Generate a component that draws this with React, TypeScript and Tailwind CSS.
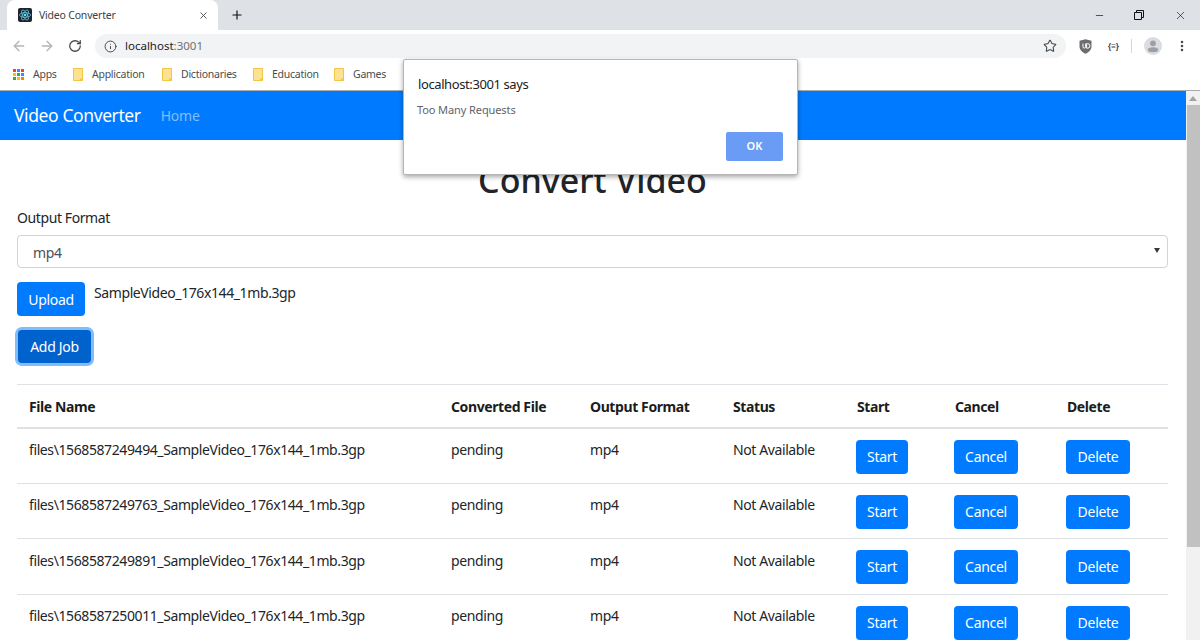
import React from "react";
import { ArrowLeft, ArrowRight, RotateCw, Info, Star, X, Plus, Minus, MoreVertical } from "lucide-react";

const FONT = "font-['Noto_Sans','Open_Sans',sans-serif]";

function Folder() {
  return (
    <svg width="10" height="13" viewBox="0 0 10 13" className="shrink-0">
      <path d="M.5.5h9v12h-9z" fill="#fde293" stroke="#f1c644" />
      <path d="M7 10.5h3v2H7z" fill="#f1c644" />
    </svg>
  );
}

function Bookmark({ label, w }: { label: string; w: string }) {
  return (
    <div className={`flex items-center gap-[9px] ${w}`}>
      <Folder />
      <span className="text-[10.5px] tracking-[-0.25px] text-[#4a4d51] whitespace-nowrap">{label}</span>
    </div>
  );
}

function AppsIcon() {
  const c = ["#ea4335", "#4285f4", "#ea4335", "#fbbc05", "#34a853", "#4285f4", "#34a853", "#fbbc05", "#ea8600"];
  return (
    <div className="grid grid-cols-3 gap-[1px] w-[11px] h-[11px] shrink-0">
      {c.map((x, i) => (
        <svg key={i} width="3" height="3" viewBox="0 0 3 3">
          <rect width="3" height="3" fill={x} />
        </svg>
      ))}
    </div>
  );
}

function ReactFavicon() {
  return (
    <svg width="14" height="14" viewBox="0 0 14 14" className="shrink-0">
      <rect width="14" height="14" rx="2" fill="#20232a" />
      <circle cx="7" cy="7" r="1.3" fill="#61dafb" />
      <g fill="none" stroke="#61dafb" strokeWidth=".7">
        <ellipse cx="7" cy="7" rx="5.6" ry="2.3" />
        <ellipse cx="7" cy="7" rx="5.6" ry="2.3" transform="rotate(60 7 7)" />
        <ellipse cx="7" cy="7" rx="5.6" ry="2.3" transform="rotate(120 7 7)" />
      </g>
    </svg>
  );
}

function Shield() {
  return (
    <svg width="13" height="15" viewBox="0 0 13 15">
      <path d="M.5 1.8 6.5.2l6 1.6v5.6c0 3.4-2.8 5.8-6 7.4-3.2-1.6-6-4-6-7.4z" fill="#6a6e73" />
      <path d="M4 4.6v3.2a1.3 1.3 0 0 0 2.6 0V4.6M7.6 4.6v4.6h1a2.3 2.3 0 0 0 0-4.6z" fill="none" stroke="#fff" strokeWidth="1" />
    </svg>
  );
}

function Avatar() {
  return (
    <svg width="18" height="18" viewBox="0 0 18 18">
      <circle cx="9" cy="9" r="9" fill="#dadce0" />
      <circle cx="9" cy="6.3" r="2.9" fill="#9aa0a6" />
      <ellipse cx="9" cy="12.8" rx="5.2" ry="2.5" fill="#9aa0a6" />
    </svg>
  );
}

function RestoreIcon() {
  return (
    <svg width="10" height="10" viewBox="0 0 10 10" fill="none" stroke="#111" strokeWidth="1">
      <path d="M.5 2.5h7v7h-7z" />
      <path d="M2.5 2.5v-2h7v7h-2" />
    </svg>
  );
}

function Btn({ label, w }: { label: string; w: string }) {
  return (
    <button className={`${w} h-[34px] rounded-[4px] bg-[#007bff] text-white text-[14px] tracking-[-0.3px] flex items-center justify-center`}>
      {label}
    </button>
  );
}

const rows = ["1568587249494", "1568587249763", "1568587249891", "1568587250011"];
const td = "px-3 pt-[10.5px] align-top h-[55.5px] border-b border-[#dee2e6]";
const tdb = "px-3 pt-[10.5px] align-top border-b border-[#dee2e6]";
const tdBtn = "pl-[11px] pr-3 pt-[11px] align-top border-b border-[#dee2e6]";

export default function App() {
  return (
    <div className={`relative w-[1200px] h-[640px] overflow-hidden bg-white text-[#212529] ${FONT}`}>
      {/* Tab strip */}
      <div className="h-[30px] bg-[#dee1e6] flex items-end pl-[7px]">
        <div className="w-[211px] h-[30px] bg-white rounded-t-[8px] flex items-center pl-[11px] pr-[9px]">
          <ReactFavicon />
          <span className="ml-[7px] mt-[1px] text-[10.5px] tracking-[-0.2px] text-[#3c4043] whitespace-nowrap">Video Converter</span>
          <X size={11} strokeWidth={2} className="ml-auto text-[#45484c]" />
        </div>
        <Plus size={14} strokeWidth={2} className="ml-[12px] mb-[8px] text-[#111]" />
        <div className="ml-auto h-[30px] flex items-center pr-[13px]">
          <Minus size={11} strokeWidth={1.5} className="text-[#111] mr-[29px]" />
          <RestoreIcon />
          <X size={13} strokeWidth={1.2} className="text-[#111] ml-[30px]" />
        </div>
      </div>

      {/* Toolbar */}
      <div className="h-[30px] pt-[2px] bg-white flex items-center pl-[11px]">
        <ArrowLeft size={16} strokeWidth={2} className="text-[#b1b4b8]" />
        <ArrowRight size={16} strokeWidth={2} className="ml-[12px] text-[#b1b4b8]" />
        <RotateCw size={14} strokeWidth={2.2} className="ml-[13px] text-[#45484c]" />
        <div className="ml-[13px] w-[971px] h-[24px] rounded-full bg-[#f1f3f4] flex items-center pl-[9px] pr-[9px]">
          <Info size={13} strokeWidth={1.8} className="text-[#45484c]" />
          <span className="ml-[8px] text-[11.5px] text-[#202124]">
            localhost<span className="text-[#6d7074]">:3001</span>
          </span>
          <Star size={14} strokeWidth={1.8} className="ml-auto text-[#45484c]" />
        </div>
        <div className="ml-[13px] flex items-center">
          <Shield />
          <span className="ml-[16px] w-[13px] text-[8px] font-bold text-[#3c4043] whitespace-nowrap">{"{≡}"}</span>
          <div className="ml-[10px] w-px h-[14px] bg-[#d5d7da]" />
          <div className="ml-[12px]"><Avatar /></div>
          <MoreVertical size={14} strokeWidth={2.4} className="ml-[13px] text-[#45484c]" />
        </div>
      </div>

      {/* Bookmarks */}
      <div className="bg-white flex items-center pl-[13px] pb-[1px] border-b border-[#a8abae] box-content h-[29px]">
        <div className="flex items-center gap-[9px] w-[60px]">
          <AppsIcon />
          <span className="text-[10.5px] tracking-[-0.25px] text-[#4a4d51]">Apps</span>
        </div>
        <Bookmark label="Application" w="w-[89px]" />
        <Bookmark label="Dictionaries" w="w-[91px]" />
        <Bookmark label="Education" w="w-[81px]" />
        <Bookmark label="Games" w="w-[70px]" />
        <Folder />
      </div>

      <div className="flex h-[549px]">
        {/* Page */}
        <div className="w-[1186px]">
          <nav className="h-[49px] bg-[#007bff] flex items-center pl-[14px]">
            <span className="text-[17.5px] tracking-[-0.4px] text-white whitespace-nowrap">Video Converter</span>
            <span className="ml-[20px] text-[14px] tracking-[-0.2px] text-[#80bdff]">Home</span>
          </nav>
          <div className="pl-[17px] pr-[18px]">
            <h1 className="mt-[18px] h-[45px] text-center text-[34px] leading-[45px] font-medium text-[#212529]">Convert Video</h1>
            <label className="mt-[3px] block text-[14px] tracking-[-0.4px] leading-[24px] text-[#212529]">Output Format</label>
            <div className="mt-[5px] h-[33px] rounded-[4px] border border-[#ced4da] flex items-center pl-[15px] pr-[7px]">
              <span className="mt-[1px] text-[14px] tracking-[-0.3px] text-[#495057]">mp4</span>
              <svg width="6" height="5" viewBox="0 0 6 5" className="ml-auto -mt-[3px]"><path d="M0 0h6L3 5z" fill="#343a40" /></svg>
            </div>
            <div className="mt-[14px] flex items-start">
              <Btn label="Upload" w="w-[68px]" />
              <span className="ml-[9px] -mt-[1px] text-[14px] tracking-[-0.4px] leading-[24px] text-[#212529]">SampleVideo_176x144_1mb.3gp</span>
            </div>
            <button className="mt-[14px] ml-px w-[73px] h-[33px] block rounded-[4px] bg-[#0062cc] text-white text-[14px] tracking-[-0.3px] ring-[3px] ring-[#80bdff]">
              Add Job
            </button>
            <table className="mt-[21px] w-[1151px] table-fixed border-collapse text-[14px] tracking-[-0.4px] leading-[22px]">
              <colgroup>
                <col className="w-[422px]" />
                <col className="w-[139px]" />
                <col className="w-[143px]" />
                <col className="w-[124px]" />
                <col className="w-[98px]" />
                <col className="w-[112px]" />
                <col className="w-[113px]" />
              </colgroup>
              <thead>
                <tr className="h-[43px] border-t border-b-2 border-[#dee2e6] text-left text-[#1a1d20]">
                  {["File Name", "Converted File", "Output Format", "Status", "Start", "Cancel", "Delete"].map((h) => (
                    <th key={h} className="px-3 pt-[2px] font-bold">{h}</th>
                  ))}
                </tr>
              </thead>
              <tbody>
                {rows.map((r) => (
                  <tr key={r}>
                    <td className={td}>{`files\\${r}_SampleVideo_176x144_1mb.3gp`}</td>
                    <td className={tdb}>pending</td>
                    <td className={tdb}>mp4</td>
                    <td className={tdb}>Not Available</td>
                    <td className={tdBtn}><Btn label="Start" w="w-[52px]" /></td>
                    <td className={tdBtn}><Btn label="Cancel" w="w-[64px]" /></td>
                    <td className={tdBtn}><Btn label="Delete" w="w-[64px]" /></td>
                  </tr>
                ))}
              </tbody>
            </table>
          </div>
        </div>
        {/* Scrollbar */}
        <div className="w-[14px] bg-[#f1f1f1] flex flex-col items-center">
          <svg width="8" height="5" viewBox="0 0 8 5" className="mt-[5px]"><path d="M4 0l4 5H0z" fill="#a3a3a3" /></svg>
          <div className="mt-[4px] w-[13px] h-[442px] bg-[#c1c1c1]" />
        </div>
      </div>

      {/* Alert dialog */}
      <div className="absolute left-[403px] top-[59px] w-[395px] h-[116px] bg-white rounded-[2px] border border-[#b5b5b5] shadow-[0_2px_5px_rgba(0,0,0,0.35)]">
        <div className="absolute left-[14px] top-[14px] text-[13px] tracking-[-0.4px] leading-[20px] text-[#202124]">localhost:3001 says</div>
        <div className="absolute left-[13px] top-[42px] text-[11px] tracking-[-0.1px] leading-[16px] text-[#5f6368]">Too Many Requests</div>
        <button className="absolute left-[322px] top-[72px] w-[57px] h-[29px] rounded-[2px] bg-[#6a9cf5] text-white text-[11px] font-semibold">OK</button>
      </div>
    </div>
  );
}
